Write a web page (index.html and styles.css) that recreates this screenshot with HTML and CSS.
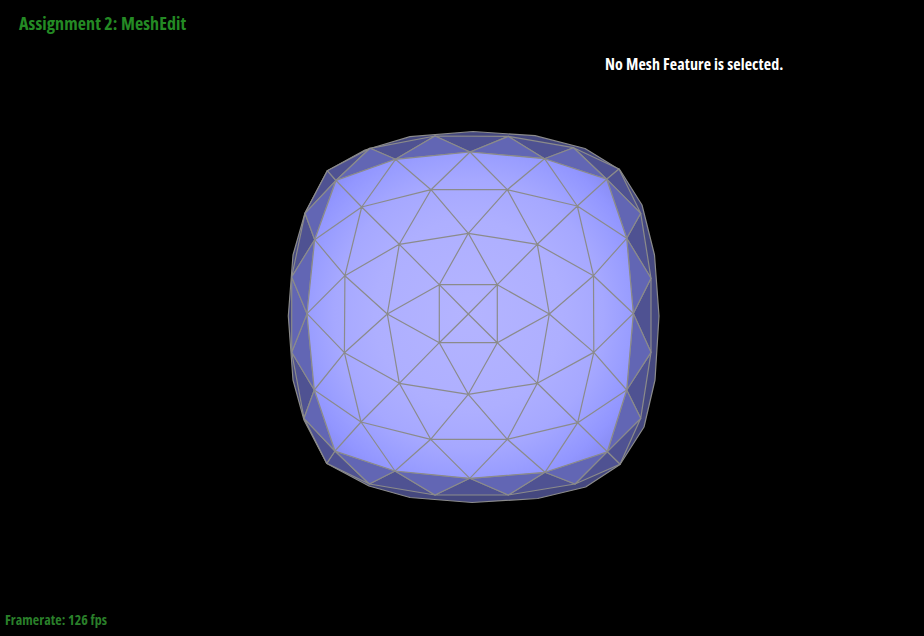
FILE: index.html
```html
<!DOCTYPE html>
<html lang="en">
<head>
<meta charset="utf-8">
<title>MeshEdit</title>
<link rel="stylesheet" href="styles.css">
</head>
<body>
<main class="app">
  <svg class="mesh" viewBox="0 0 924 636" aria-hidden="true">
    <defs>
      <radialGradient id="front" gradientUnits="userSpaceOnUse" cx="469" cy="314" r="210">
        <stop offset="0" stop-color="#b4b4ff"/>
        <stop offset="0.45" stop-color="#aeafff"/>
        <stop offset="0.64" stop-color="#a6a8ff"/>
        <stop offset="0.76" stop-color="#9a9eff"/>
        <stop offset="0.84" stop-color="#9296ff"/>
        <stop offset="0.92" stop-color="#888cf3"/>
        <stop offset="1" stop-color="#7c80e0"/>
      </radialGradient>
    </defs>
    <polygon class="back" points="473,131.5 535,135.7 585,148.5 620,170 642,205 654.5,255 659,316 655,380 644,427 620,464.5 585.7,487 537.7,498.5 472,502.5 410,497.5 369,486 326.7,463.5 304,420 293,380 288.3,316 293,255 305,213 327.3,170.7 365,150 410,136.7"/>
    <g class="band-dark">
      <polygon points="395.5,159.3 435,136 370,148.3"/>
      <polygon points="544.5,158.7 573.5,147.7 508.4,136.4"/>
      <polygon points="606.7,179.2 619,169 573.5,147.7"/>
      <polygon points="606.7,179.2 640.7,213.3 619,169"/>
      <polygon points="626.7,238.3 651,278.3 640.7,213.3"/>
      <polygon points="626.7,390 640.7,418.3 651,352.3"/>
      <polygon points="607.3,451.7 620,464.3 640.7,418.3"/>
      <polygon points="607.3,451.7 575,484 620,464.3"/>
      <polygon points="545,472.3 508.3,495 575,484"/>
      <polygon points="395,471 369.3,484 435,495"/>
      <polygon points="335,451 326.7,463.3 369.3,484"/>
      <polygon points="335,451 304,418.3 326.7,463.3"/>
      <polygon points="314.3,390 291.7,352.3 304,418.3"/>
      <polygon points="314.7,239.7 305,213.3 291.7,277"/>
      <polygon points="336,180.5 327.3,170.7 305,213.3"/>
      <polygon points="336,180.5 370,148.3 327.3,170.7"/>
      <polygon points="469.8,478.3 435,495 508.3,495"/>
      <polygon points="470,152 435,136 508.4,136.4"/>
      <polygon points="633.3,313.5 651,352.3 651,278.3"/>
    </g>
    <g class="band-mid">
      <polygon points="336,180.5 395.5,159.3 370,148.3"/>
      <polygon points="395.5,159.3 470,152 435,136"/>
      <polygon points="470,152 544.5,158.7 508.4,136.4"/>
      <polygon points="544.5,158.7 606.7,179.2 573.5,147.7"/>
      <polygon points="606.7,179.2 626.7,238.3 640.7,213.3"/>
      <polygon points="626.7,238.3 633.3,313.5 651,278.3"/>
      <polygon points="633.3,313.5 626.7,390 651,352.3"/>
      <polygon points="626.7,390 607.3,451.7 640.7,418.3"/>
      <polygon points="607.3,451.7 545,472.3 575,484"/>
      <polygon points="545,472.3 469.8,478.3 508.3,495"/>
      <polygon points="469.8,478.3 395,471 435,495"/>
      <polygon points="395,471 335,451 369.3,484"/>
      <polygon points="335,451 314.3,390 304,418.3"/>
      <polygon points="314.3,390 307,313.7 291.7,352.3"/>
      <polygon points="307,313.7 291.7,277 291.7,352.3"/>
      <polygon points="307,313.7 314.7,239.7 291.7,277"/>
      <polygon points="314.7,239.7 336,180.5 305,213.3"/>
    </g>
    <polygon class="front" points="395.5,159.3 470,152 544.5,158.7 606.7,179.2 626.7,238.3 633.3,313.5 626.7,390 607.3,451.7 545,472.3 469.8,478.3 395,471 335,451 314.3,390 307,313.7 314.7,239.7 336,180.5"/>
    <path class="edges" d="M439.3 284.7H497.3V342.7H439.3Z
      M468.3 314L439.3 284.7M468.3 314L497.3 284.7M468.3 314L497.3 342.7M468.3 314L439.3 342.7
      M468.3 233.3L439.3 284.7M468.3 233.3L497.3 284.7M468.3 233.3L431 189.7M468.3 233.3L507.3 189.7M468.3 233.3L399.3 244.3M468.3 233.3L537.3 244.3
      M549.3 314L497.3 284.7M549.3 314L497.3 342.7M549.3 314L537.3 244.3M549.3 314L537.3 383.3M549.3 314L593.5 275.7M549.3 314L593.8 352.4
      M468.3 394.3L497.3 342.7M468.3 394.3L439.3 342.7M468.3 394.3L537.3 383.3M468.3 394.3L399.3 383.3M468.3 394.3L507.3 439.3M468.3 394.3L430.7 439.3
      M387.3 314L439.3 284.7M387.3 314L439.3 342.7M387.3 314L399.3 244.3M387.3 314L399.3 383.3M387.3 314L344.9 275.7M387.3 314L344.4 352.7
      M399.3 244.3L431 189.7M399.3 244.3L361.7 207M399.3 244.3L344.9 275.7M399.3 244.3L439.3 284.7
      M537.3 244.3L507.3 189.7M537.3 244.3L577.3 206M537.3 244.3L593.5 275.7M537.3 244.3L497.3 284.7
      M537.3 383.3L593.8 352.4M537.3 383.3L577.7 422.7M537.3 383.3L507.3 439.3M537.3 383.3L497.3 342.7
      M399.3 383.3L344.4 352.7M399.3 383.3L361 422M399.3 383.3L430.7 439.3M399.3 383.3L439.3 342.7
      M431 189.7H507.3M593.5 275.7L593.8 352.4M507.3 439.3H430.7M344.4 352.7L344.9 275.7
      M361.7 207L431 189.7M361.7 207L344.9 275.7M361.7 207L336 180.5M361.7 207L314.7 239.7M361.7 207L395.5 159.3
      M577.3 206L507.3 189.7M577.3 206L593.5 275.7M577.3 206L606.7 179.2M577.3 206L626.7 238.3M577.3 206L544.5 158.7
      M577.7 422.7L593.8 352.4M577.7 422.7L507.3 439.3M577.7 422.7L607.3 451.7M577.7 422.7L626.7 390M577.7 422.7L545 472.3
      M361 422L430.7 439.3M361 422L344.4 352.7M361 422L335 451M361 422L314.3 390M361 422L395 471
      M431 189.7L395.5 159.3M431 189.7L470 152M507.3 189.7L470 152M507.3 189.7L544.5 158.7
      M593.5 275.7L626.7 238.3M593.5 275.7L633.3 313.5M593.8 352.4L633.3 313.5M593.8 352.4L626.7 390
      M507.3 439.3L545 472.3M507.3 439.3L469.8 478.3M430.7 439.3L469.8 478.3M430.7 439.3L395 471
      M344.4 352.7L307 313.7M344.4 352.7L314.3 390M344.9 275.7L307 313.7M344.9 275.7L314.7 239.7"/>
  </svg>
  <header class="hud-top">
    <h1 class="title">Assignment 2: MeshEdit</h1>
    <p class="notice">No Mesh Feature is selected.</p>
  </header>
  <footer class="framerate">Framerate: 126 fps</footer>
</main>
</body>
</html>
```

FILE: styles.css
```css
* { box-sizing: border-box; }

html, body {
  margin: 0;
  height: 100%;
  background: #000;
}

.app {
  position: relative;
  width: 924px;
  height: 636px;
  overflow: hidden;
  display: flex;
  flex-direction: column;
  justify-content: space-between;
  font-family: "Open Sans", "Liberation Sans", sans-serif;
  font-stretch: 75%;
  font-weight: 700;
}

.mesh {
  position: absolute;
  inset: 0;
  width: 924px;
  height: 636px;
}

.mesh polygon {
  stroke: #8b8b8b;
  stroke-width: 1.2;
  stroke-linejoin: round;
}

.mesh .back { fill: #45487f; }
.band-dark polygon { fill: #4f5292; }
.band-mid polygon { fill: #6266b4; }
.mesh .front { fill: url(#front); }

.edges {
  fill: none;
  stroke: #8b8b8b;
  stroke-width: 1.2;
}

.hud-top {
  position: relative;
  padding: 11px 0 0 19px;
}

.title {
  margin: 0;
  font-size: 18px;
  line-height: 24px;
  font-weight: 700;
  letter-spacing: 0.1px;
  color: #248a24;
}

.notice {
  margin: 17px 0 0 586px;
  font-size: 16px;
  line-height: 24px;
  letter-spacing: 0.11px;
  color: #fff;
}

.framerate {
  position: relative;
  padding: 0 0 6px 5px;
  font-size: 14px;
  line-height: 20px;
  letter-spacing: 0.06px;
  color: #2a7f2a;
}
```
